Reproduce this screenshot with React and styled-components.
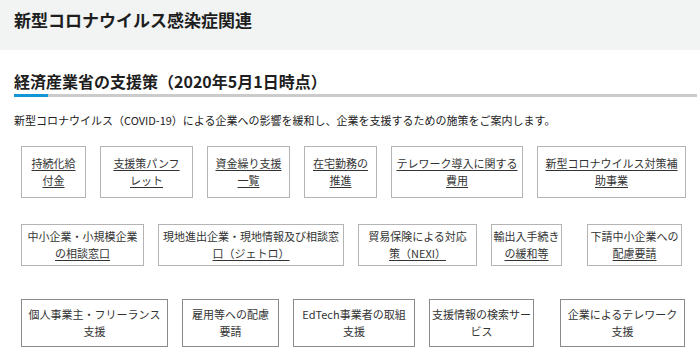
import React from "react";
import styled, { createGlobalStyle } from "styled-components";

const GlobalStyle = createGlobalStyle`
  html, body {
    margin: 0;
    padding: 0;
    background: #fff;
  }
  body {
    font-family: "Noto Sans CJK JP", "Noto Sans", sans-serif;
    color: #222;
  }
`;

const rows = [
  {
    height: 52,
    top: 19,
    items: [
      { lines: ["持続化給", "付金"], width: 65, links: [true, true] },
      { lines: ["支援策パンフ", "レット"], width: 93, links: [true, true] },
      { lines: ["資金繰り支援", "一覧"], width: 83, links: [true, true] },
      { lines: ["在宅勤務の", "推進"], width: 73, links: [true, true] },
      { lines: ["テレワーク導入に関する", "費用"], width: 132, links: [true, true] },
      { lines: ["新型コロナウイルス対策補", "助事業"], width: 149, links: [true, true] },
    ],
  },
  {
    height: 42,
    top: 26,
    items: [
      { lines: ["中小企業・小規模企業", "の相談窓口"], width: 123, links: [false, true] },
      { lines: ["現地進出企業・現地情報及び相談窓", "口（ジェトロ）"], width: 186, links: [false, true] },
      { lines: ["貿易保険による対応", "策（NEXI）"], width: 119, links: [false, true] },
      { lines: ["輸出入手続き", "の緩和等"], width: 71, links: [false, true] },
      { lines: ["下請中小企業への", "配慮要請"], width: 95, links: [false, true], extra: 11 },
    ],
  },
  {
    height: 48,
    top: 33,
    dark: true,
    items: [
      { lines: ["個人事業主・フリーランス", "支援"], width: 147, links: [false, false] },
      { lines: ["雇用等への配慮", "要請"], width: 97, links: [false, false] },
      { lines: ["EdTech事業者の取組", "支援"], width: 122, links: [false, false] },
      { lines: ["支援情報の検索サー", "ビス"], width: 105, links: [false, false] },
      { lines: ["企業によるテレワーク", "支援"], width: 125, links: [false, false], extra: 12 },
    ],
  },
];

function App() {
  return (
    <>
      <GlobalStyle />
      <Header>
        <Title>新型コロナウイルス感染症関連</Title>
      </Header>
      <Main>
        <Heading>経済産業省の支援策（2020年5月1日時点）</Heading>
        <HeadingBar>
          <span />
        </HeadingBar>
        <Lead>
          新型コロナウイルス（COVID-19）による企業への影響を緩和し、企業を支援するための施策をご案内します。
        </Lead>
        {rows.map((row, r) => (
          <ButtonRow key={r} $top={row.top}>
            {row.items.map((item, i) => (
              <LinkBox
                key={i}
                $width={item.width}
                $height={row.height}
                $extra={item.extra || 0}
                $dark={row.dark}
              >
                {item.lines.map((line, l) => (
                  <Line key={l} $link={item.links[l]}>
                    {line}
                  </Line>
                ))}
              </LinkBox>
            ))}
          </ButtonRow>
        ))}
      </Main>
    </>
  );
}

const Header = styled.header`
  height: 50px;
  background: #f1f4f3;
  display: flex;
  align-items: center;
  padding: 0 14px;
  box-sizing: border-box;
`;

const Title = styled.h1`
  margin: 0 0 12px;
  font-size: 17px;
  font-weight: 700;
  line-height: 1;
  color: #1e1e1e;
`;

const Main = styled.main`
  padding: 0 3px 0 14px;
`;

const Heading = styled.h2`
  margin: 23px 0 0;
  font-size: 16px;
  font-weight: 700;
  line-height: 16px;
  color: #1e1e1e;
`;

const HeadingBar = styled.div`
  margin-top: 5px;
  height: 3px;
  background: #cbcbcb;
  display: flex;

  span {
    width: 34px;
    background: #1296d6;
  }
`;

const Lead = styled.p`
  margin: 16px 0 0;
  font-size: 11px;
  line-height: 14px;
  color: #222;
  white-space: nowrap;
`;

const ButtonRow = styled.div`
  display: flex;
  gap: 14px;
  padding-left: 7px;
  margin-top: ${(p) => p.$top}px;
`;

const LinkBox = styled.a`
  box-sizing: border-box;
  width: ${(p) => p.$width}px;
  height: ${(p) => p.$height}px;
  margin-left: ${(p) => p.$extra}px;
  border: 1px solid ${(p) => (p.$dark ? "#8a8a8a" : "#b4b4b4")};
  display: flex;
  flex-direction: column;
  align-items: center;
  justify-content: center;
  font-size: 11px;
  line-height: 17px;
  color: #333;
  background: #fff;
  cursor: pointer;
`;

const Line = styled.span`
  white-space: nowrap;
  text-decoration: ${(p) => (p.$link ? "underline" : "none")};
  text-underline-offset: 2px;
`;

export default App;
